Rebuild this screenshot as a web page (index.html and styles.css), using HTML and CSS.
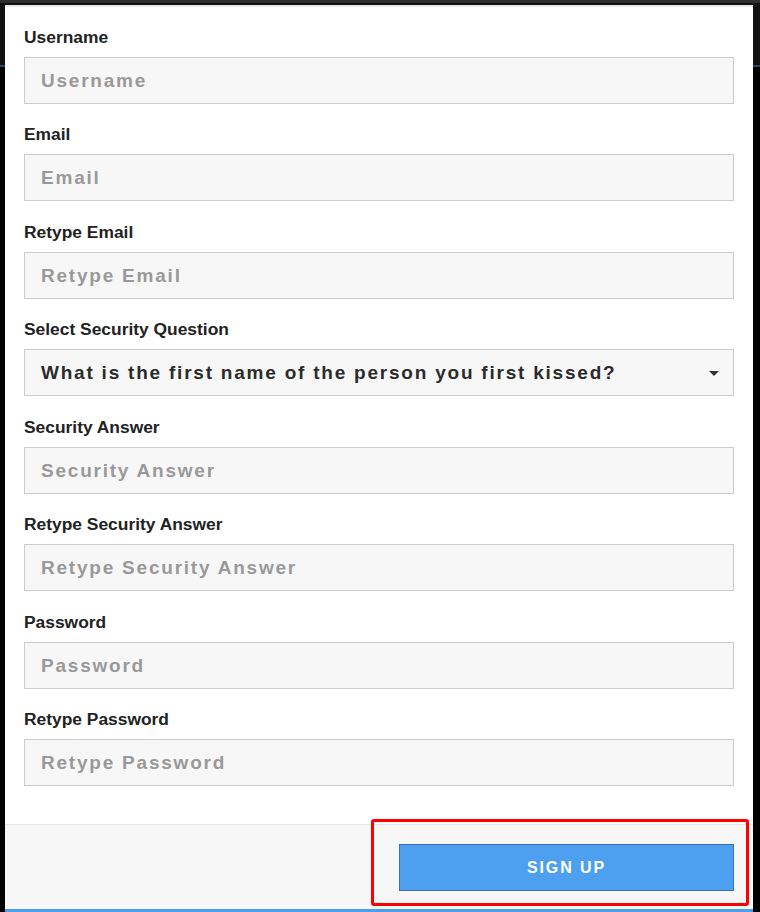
FILE: index.html
```html
<!DOCTYPE html>
<html>
<head>
<meta charset="utf-8">
<link rel="stylesheet" href="styles.css">
</head>
<body>
<header class="page-header"></header>
<div class="modal">
  <form class="modal-body">
    <div class="group">
      <label class="label">Username</label>
      <input class="field" type="text" placeholder="Username">
    </div>
    <div class="group">
      <label class="label">Email</label>
      <input class="field" type="text" placeholder="Email">
    </div>
    <div class="group">
      <label class="label">Retype Email</label>
      <input class="field" type="text" placeholder="Retype Email">
    </div>
    <div class="group">
      <label class="label">Select Security Question</label>
      <div class="select">
        <span class="select-text">What is the first name of the person you first kissed?</span>
        <span class="caret"></span>
      </div>
    </div>
    <div class="group">
      <label class="label">Security Answer</label>
      <input class="field" type="text" placeholder="Security Answer">
    </div>
    <div class="group">
      <label class="label">Retype Security Answer</label>
      <input class="field" type="text" placeholder="Retype Security Answer">
    </div>
    <div class="group">
      <label class="label">Password</label>
      <input class="field" type="password" placeholder="Password">
    </div>
    <div class="group">
      <label class="label">Retype Password</label>
      <input class="field" type="password" placeholder="Retype Password">
    </div>
  </form>
  <div class="modal-footer">
    <div></div>
    <button class="btn" type="button">SIGN UP</button>
  </div>
  <div class="highlight"></div>
</div>
</body>
</html>
```
FILE: styles.css
```css
html, body {
  margin: 0;
  padding: 0;
}
body {
  background: #000;
  height: 912px;
  overflow: hidden;
  font-family: "Liberation Sans", Arial, sans-serif;
  position: relative;
}
.page-header {
  background: #111;
  border-top: 3px solid #2e2e2e;
  border-bottom: 2px solid #2a4866;
  box-sizing: border-box;
  height: 67px;
}
.modal {
  position: absolute;
  left: 5px;
  top: 5px;
  width: 748px;
  background: #fff;
  border-top: 2px solid #e8e8e8;
  border-bottom: 3px solid #4a9fe8;
  box-sizing: border-box;
}
.modal-body {
  padding: 20px 19px 18px 19px;
  margin: 0;
}
.group {
  display: flex;
  flex-direction: column;
  gap: 9px;
  margin-bottom: 20.43px;
}
.label {
  display: block;
  font-size: 17.4px;
  line-height: 21px;
  font-weight: bold;
  color: #222;
}
.field,
.select {
  box-sizing: border-box;
  width: 100%;
  height: 47px;
  margin: 0;
  padding: 1px 16px 0 16px;
  border: 1px solid #ccc;
  background: #f7f7f7;
  font-family: "Liberation Sans", Arial, sans-serif;
  font-size: 19px;
  font-weight: bold;
  letter-spacing: 1.78px;
  color: #333;
  outline: none;
  border-radius: 0;
}
.field::placeholder {
  color: #999;
  opacity: 1;
}
.select {
  display: flex;
  align-items: center;
  justify-content: space-between;
  color: #2b2b2b;
}
.caret {
  width: 0;
  height: 0;
  border-left: 5px solid transparent;
  border-right: 5px solid transparent;
  border-top: 5px solid #333;
  margin-right: -2px;
}
.modal-footer {
  display: grid;
  grid-template-columns: 1fr 1fr;
  gap: 40px;
  padding: 19px 19px 18px 19px;
  background: #f7f7f7;
  border-top: 1px solid #e5e5e5;
}
.btn {
  height: 47px;
  padding-top: 2px;
  border: 1px solid #3d6fae;
  background: #4ca0ef;
  color: #fff;
  font-family: "Liberation Sans", Arial, sans-serif;
  font-size: 16px;
  font-weight: bold;
  letter-spacing: 1.9px;
  cursor: pointer;
}
.highlight {
  position: absolute;
  left: 366px;
  top: 812px;
  width: 378px;
  height: 87px;
  border: 3.5px solid #ff0000;
  border-radius: 3px;
  box-sizing: border-box;
  pointer-events: none;
}
```
